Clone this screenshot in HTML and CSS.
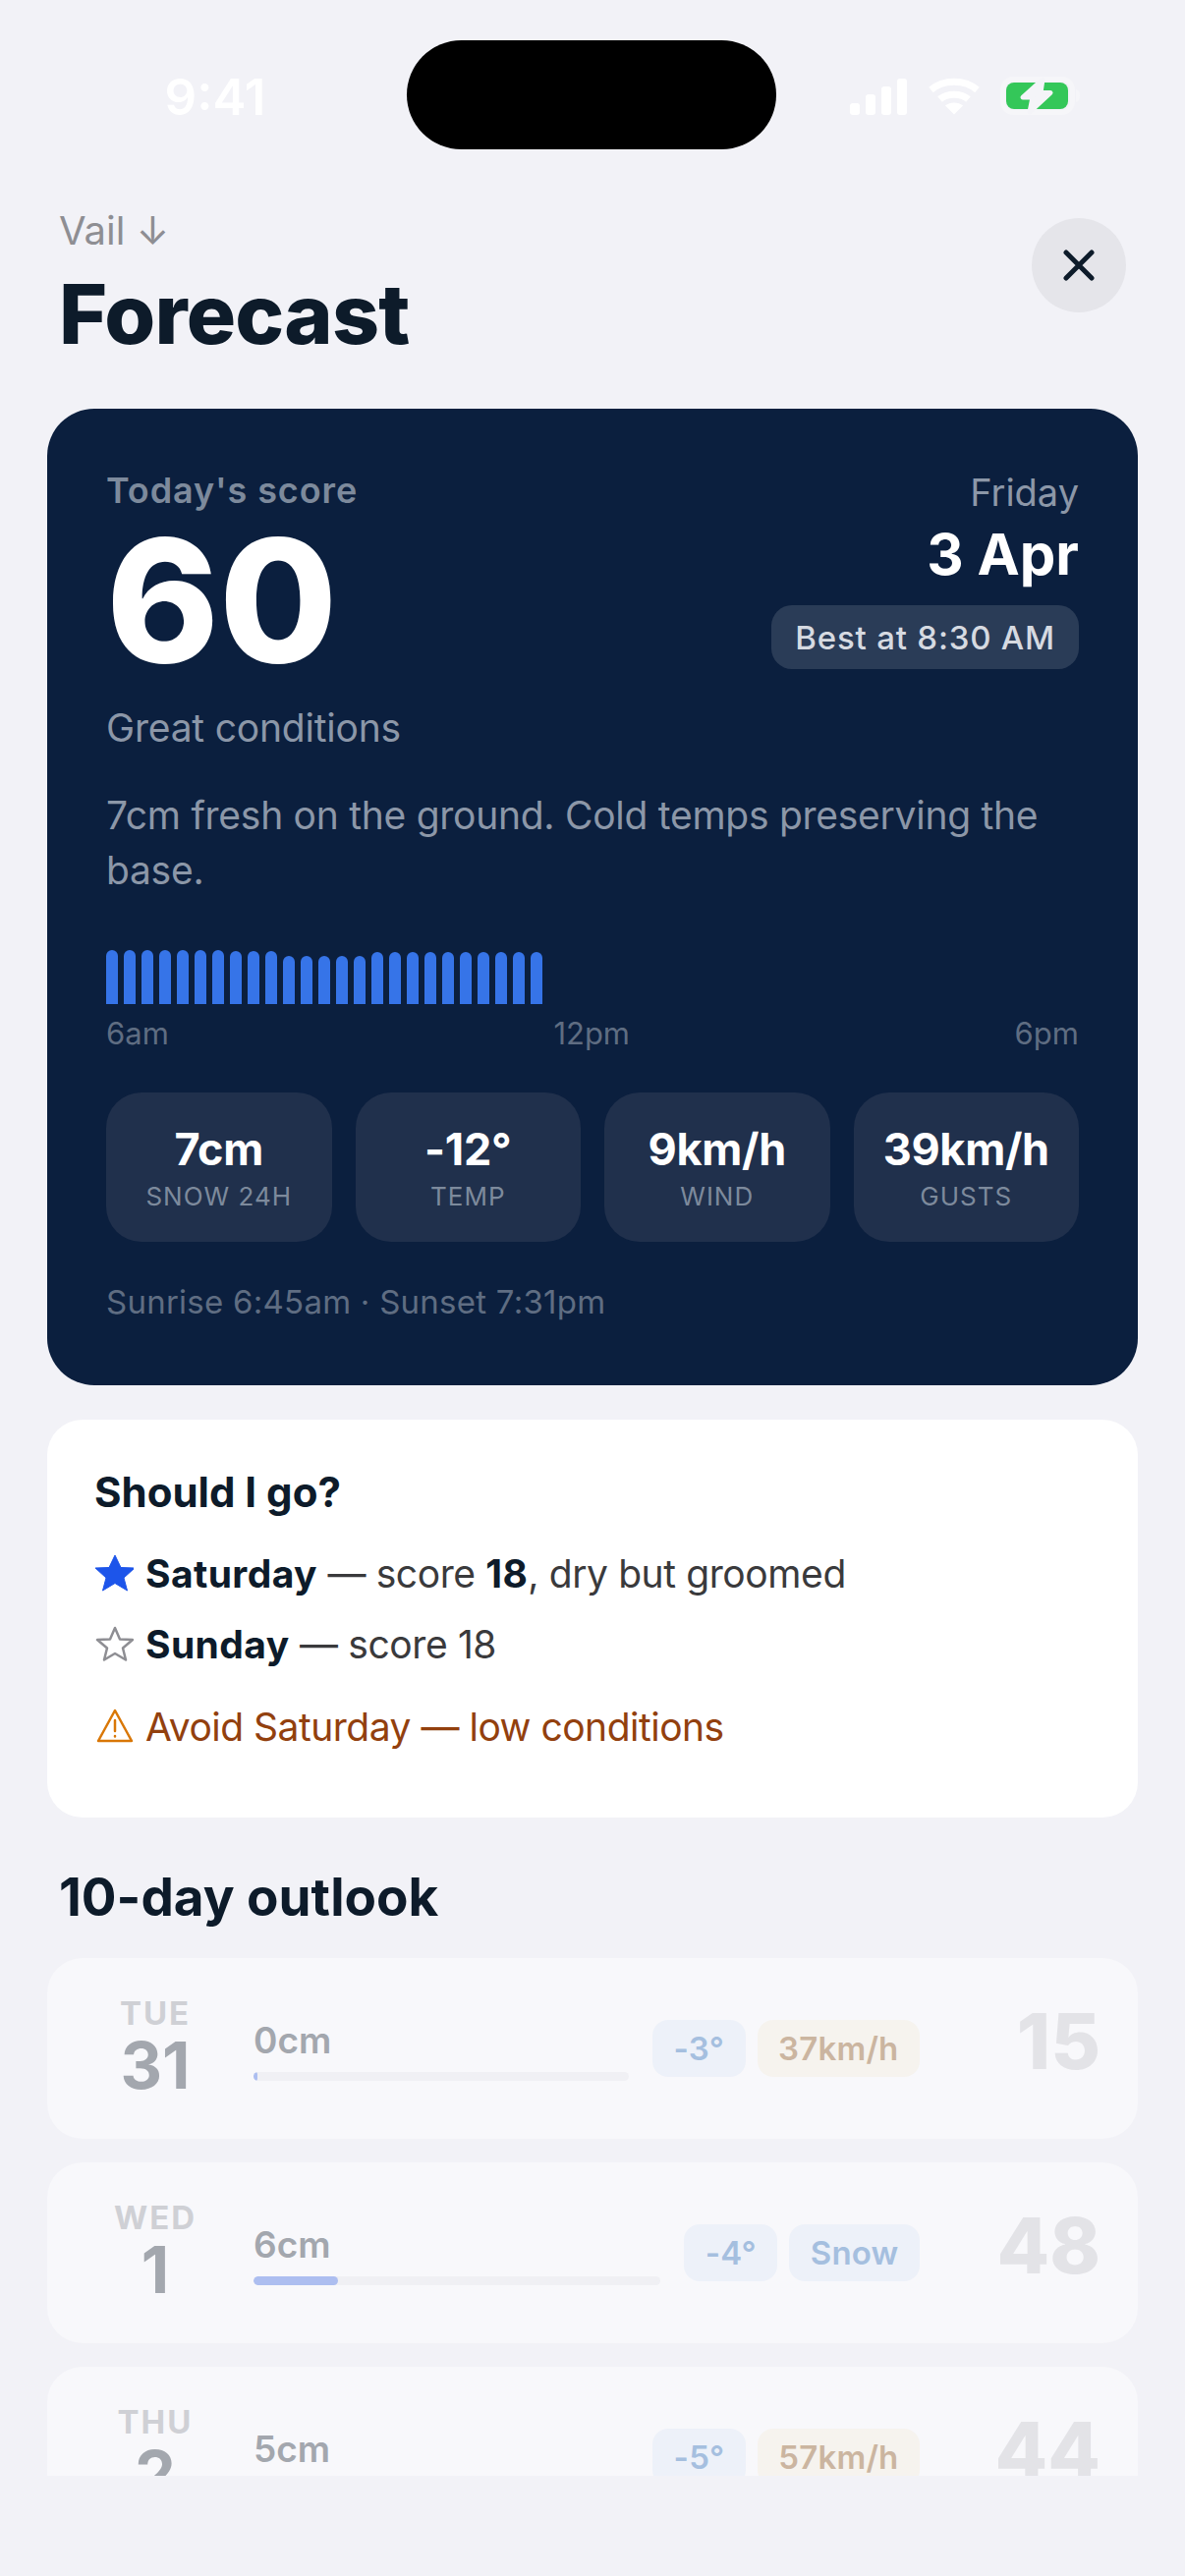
FILE: index.html
```html
<!DOCTYPE html>
<html lang="en">
<head>
    <meta charset="UTF-8">
    <meta name="viewport" content="width=device-width, initial-scale=1.0">
    <title>Forecast</title>
    <link rel="stylesheet" href="styles.css">
</head>
<body>

<div class="screen">
    <div class="status">
        <span class="time">9:41</span>
        <div class="island"></div>
        <div class="status-icons">
            <svg width="58" height="37" viewBox="0 0 58 37" fill="#fff">
                <rect x="0" y="25" width="10" height="12" rx="3"/>
                <rect x="16" y="16" width="10" height="21" rx="3"/>
                <rect x="32" y="8" width="10" height="29" rx="3"/>
                <rect x="48" y="0" width="10" height="37" rx="3"/>
            </svg>
            <svg width="52" height="38" viewBox="0 0 52 38" fill="none" stroke="#fff" stroke-width="7">
                <path d="M2.500 12.500 C15 1.500 37 1.500 49.500 12.500"/>
                <path d="M11.500 22 C19 15.500 33 15.500 40.500 22"/>
                <path d="M26 37.500 L17 28.500 C22 24.500 30 24.500 35 28.500 Z" fill="#fff" stroke="none"/>
            </svg>
            <svg class="battery" width="82" height="40" viewBox="0 0 82 40">
                <rect x="2.500" y="2.500" width="71" height="34" rx="11" fill="none" stroke="#f6f6f9" stroke-width="5"/>
                <path d="M77 13 C80 14 81 16 81 19.500 C81 23 80 25 77 26 Z" fill="#f6f6f9"/>
                <rect x="6" y="6" width="63" height="27" rx="8" fill="#34c759"/>
                <path d="M43 3 L23 21 L33 21 L30 36 L51 16.500 L41 16.500 Z" fill="#f4f4f8" stroke="#f4f4f8" stroke-width="5" stroke-linejoin="round"/>
            </svg>
        </div>
    </div>

    <div class="scroll">
        <div class="header">
            <div>
                <div class="resort">Vail ↓</div>
                <h1>Forecast</h1>
            </div>
            <div class="close">
                <svg width="34" height="34" viewBox="0 0 34 34" fill="none" stroke="#0d1b2a" stroke-width="5" stroke-linecap="round">
                    <path d="M4 4 L30 30 M30 4 L4 30"/>
                </svg>
            </div>
        </div>

        <div class="hero">
            <div class="hero-top">
                <div>
                    <div class="hero-label">Today's score</div>
                    <div class="hero-score">60</div>
                </div>
                <div class="hero-date">
                    <div class="hero-day">Friday</div>
                    <div class="hero-num">3 Apr</div>
                    <div class="hero-best">Best at 8:30 AM</div>
                </div>
            </div>
            <div class="hero-cond">Great conditions</div>
            <p class="hero-desc">7cm fresh on the ground. Cold temps preserving the base.</p>

            <div class="hours">
                <i style="height:55px"></i><i style="height:55px"></i><i style="height:55px"></i><i style="height:55px"></i><i style="height:55px"></i>
                <i style="height:55px"></i><i style="height:55px"></i><i style="height:54px"></i><i style="height:54px"></i><i style="height:54px"></i>
                <i style="height:49px"></i><i style="height:49px"></i><i style="height:49px"></i><i style="height:49px"></i><i style="height:49px"></i>
                <i style="height:53px"></i><i style="height:53px"></i><i style="height:53px"></i><i style="height:53px"></i><i style="height:53px"></i>
                <i style="height:53px"></i><i style="height:53px"></i><i style="height:53px"></i><i style="height:53px"></i><i style="height:53px"></i>
            </div>
            <div class="hour-labels">
                <span>6am</span>
                <span>12pm</span>
                <span>6pm</span>
            </div>

            <div class="stats">
                <div class="stat"><b>7cm</b><span>SNOW 24H</span></div>
                <div class="stat"><b>-12°</b><span>TEMP</span></div>
                <div class="stat"><b>9km/h</b><span>WIND</span></div>
                <div class="stat"><b>39km/h</b><span>GUSTS</span></div>
            </div>
            <div class="sun">Sunrise 6:45am · Sunset 7:31pm</div>
        </div>

        <div class="go">
            <h3>Should I go?</h3>
            <div class="go-row">
                <svg width="40" height="38" viewBox="0 0 40 38"><path d="M21 1 L27 13.500 L41 14 L30 24 L33.500 37 L21 29.500 L8.500 37 L12 24 L1 14 L15 13.500 Z" fill="#1d55ea" stroke="#1d55ea" stroke-width="1" stroke-linejoin="round"/></svg>
                <span><b>Saturday</b> — score <b>18</b>, dry but groomed</span>
            </div>
            <div class="go-row">
                <svg width="40" height="38" viewBox="0 0 40 38"><path d="M21 3 L26 14.500 L39 15 L29 23.500 L32 35.500 L21 29 L10 35.500 L13 23.500 L3 15 L16 14.500 Z" fill="none" stroke="#8e8e93" stroke-width="2.500" stroke-linejoin="round"/></svg>
                <span><b>Sunday</b> — score 18</span>
            </div>
            <div class="go-row go-warn">
                <svg width="40" height="38" viewBox="0 0 40 38" fill="none" stroke="#d97706" stroke-width="2.500" stroke-linejoin="round" stroke-linecap="round">
                    <path d="M21 3 L38 34 L4 34 Z"/>
                    <path d="M21 13 L21 24 M21 29 L21 29.500"/>
                </svg>
                <span>Avoid Saturday — low conditions</span>
            </div>
        </div>

        <h2>10-day outlook</h2>

        <div class="day">
            <div class="day-date"><small>TUE</small><b>31</b></div>
            <div class="day-snow">
                <span>0cm</span>
                <div class="track"><div class="fill" style="width:4px"></div></div>
            </div>
            <div class="chips"><span class="chip">-3°</span><span class="chip warm">37km/h</span></div>
            <div class="day-score">15</div>
        </div>
        <div class="day">
            <div class="day-date"><small>WED</small><b>1</b></div>
            <div class="day-snow">
                <span>6cm</span>
                <div class="track"><div class="fill" style="width:86px"></div></div>
            </div>
            <div class="chips"><span class="chip">-4°</span><span class="chip">Snow</span></div>
            <div class="day-score">48</div>
        </div>
        <div class="day">
            <div class="day-date"><small>THU</small><b>2</b></div>
            <div class="day-snow">
                <span>5cm</span>
                <div class="track"><div class="fill" style="width:70px"></div></div>
            </div>
            <div class="chips"><span class="chip">-5°</span><span class="chip warm">57km/h</span></div>
            <div class="day-score">44</div>
        </div>
    </div>
</div>

</body>
</html>
```

FILE: styles.css
```css
* {
    box-sizing: border-box;
}
body {
    margin: 0;
    background-color: #f2f2f7;
    font-family: Inter, "Noto Sans", sans-serif;
    color: #0d1b2a;
}
.screen {
    width: 1206px;
    height: 2622px;
    overflow: hidden;
}

/* status bar */
.status {
    height: 152px;
    padding-top: 41px;
    display: flex;
    align-items: flex-start;
}
.time {
    width: 414px;
    text-align: center;
    margin-top: 30px;
    padding-left: 24px;
    font-size: 51px;
    line-height: 56px;
    font-weight: 600;
    color: #fff;
}
.island {
    width: 376px;
    height: 111px;
    background: #000;
    border-radius: 56px;
}
.status-icons {
    margin-left: 75px;
    margin-top: 37px;
    display: flex;
    align-items: center;
    gap: 22px;
}
.battery {
    margin-left: -1px;
}

/* header */
.scroll {
    height: 2368px;
    overflow: hidden;
    padding: 0 48px;
}
.header {
    display: flex;
    justify-content: space-between;
    padding: 53px 12px 0;
    height: 264px;
}
.resort {
    margin-bottom: 5px;
    font-size: 40px;
    line-height: 60px;
    color: #8e8e93;
}
h1 {
    margin: 0;
    font-size: 84px;
    line-height: 100px;
    font-weight: 800;
    letter-spacing: -0.8px;
}
.close {
    width: 96px;
    height: 96px;
    margin-top: 17px;
    border-radius: 50%;
    background: #e5e5ea;
    display: flex;
    align-items: center;
    justify-content: center;
}

/* hero card */
.hero {
    background: #0b1f3e;
    border-radius: 48px;
    padding: 62px 60px 0;
    height: 994px;
    color: #fff;
}
.hero-top {
    display: flex;
    justify-content: space-between;
}
.hero-label {
    font-size: 36px;
    line-height: 42px;
    font-weight: 600;
    letter-spacing: 0.9px;
    color: #7d8a9c;
}
.hero-score {
    margin-top: -2px;
    margin-bottom: 2px;
    font-size: 174px;
    line-height: 185px;
    font-weight: 800;
}
.hero-date {
    display: flex;
    flex-direction: column;
    align-items: flex-end;
}
.hero-day {
    margin-top: -1px;
    font-size: 38px;
    line-height: 48px;
    color: #8c97a8;
}
.hero-num {
    margin-top: 3px;
    font-size: 58px;
    line-height: 72px;
    font-weight: 700;
}
.hero-best {
    margin-top: 16px;
    height: 65px;
    padding: 0 24px;
    display: flex;
    align-items: center;
    font-size: 33px;
    font-weight: 500;
    letter-spacing: 0.8px;
    color: #d6dae1;
    background: rgba(255, 255, 255, 0.13);
    border-radius: 21px;
}
.hero-cond {
    margin-top: 11px;
    font-size: 39px;
    line-height: 50px;
    letter-spacing: -0.2px;
    color: #8c97a8;
}
.hero-desc {
    margin: 36px 0 0;
    font-size: 39px;
    line-height: 56px;
    letter-spacing: -0.27px;
    color: #8c97a8;
}
.hours {
    margin-top: 53px;
    height: 55px;
    display: flex;
    align-items: flex-end;
    gap: 6px;
}
.hours i {
    display: block;
    width: 12px;
    background: #3674e8;
    border-radius: 6px 6px 0 0;
}
.hour-labels {
    margin-top: 10px;
    display: flex;
    justify-content: space-between;
    font-size: 31px;
    line-height: 40px;
    color: #5f6d82;
}
.stats {
    margin-top: 40px;
    display: grid;
    grid-template-columns: repeat(4, 1fr);
    gap: 24px;
}
.stat {
    height: 152px;
    background: #20304c;
    border-radius: 36px;
    display: flex;
    flex-direction: column;
    align-items: center;
    justify-content: center;
}
.stat b {
    font-size: 45px;
    line-height: 60px;
    font-weight: 700;
    letter-spacing: -0.3px;
}
.stat span {
    font-size: 26px;
    line-height: 36px;
    letter-spacing: 1px;
    color: #7d8a9c;
}
.sun {
    margin-top: 39px;
    font-size: 33px;
    line-height: 44px;
    letter-spacing: 0.25px;
    color: #5f6d82;
}

/* should I go */
.go {
    margin-top: 35px;
    height: 405px;
    background: #fff;
    border-radius: 36px;
    padding: 48px;
}
h3 {
    margin: 0 0 20px;
    font-size: 42px;
    line-height: 52px;
    font-weight: 700;
}
.go-row {
    display: flex;
    align-items: center;
    gap: 12px;
    height: 72px;
    font-size: 39px;
    letter-spacing: -0.4px;
    color: #3a3a3c;
}
.go-row b {
    color: #0d1b2a;
    font-weight: 700;
    letter-spacing: 0.4px;
}
.go-warn {
    margin-top: 12px;
    letter-spacing: -0.5px;
    color: #92400e;
}

/* outlook, past days are washed out */
h2 {
    margin: 48px 12px 29px;
    font-size: 53px;
    line-height: 66px;
    font-weight: 700;
}
.day {
    height: 184px;
    margin-bottom: 24px;
    padding: 0 38px 0 40px;
    background: #f8f8fb;
    border-radius: 36px;
    display: flex;
    align-items: center;
}
.day-date {
    width: 140px;
    margin-right: 30px;
    margin-bottom: 3px;
    display: flex;
    flex-direction: column;
    align-items: center;
}
.day-date small {
    font-size: 33px;
    line-height: 38px;
    font-weight: 700;
    letter-spacing: 2px;
    color: #cfd0d5;
}
.day-date b {
    font-size: 66px;
    line-height: 69px;
    font-weight: 700;
    color: #a3a7ae;
}
.day-snow {
    flex: 1;
    margin-right: 24px;
    margin-top: 2px;
}
.day-snow span {
    display: block;
    font-size: 37px;
    line-height: 44px;
    font-weight: 600;
    color: #a3a7ae;
}
.track {
    margin-top: 10px;
    height: 9px;
    background: #f0f0f4;
    border-radius: 5px;
    overflow: hidden;
}
.fill {
    height: 100%;
    background: #adbef0;
    border-radius: 5px;
}
.chips {
    display: flex;
    gap: 12px;
}
.chip {
    height: 58px;
    padding: 0 21.5px;
    display: flex;
    align-items: center;
    font-size: 33px;
    font-weight: 600;
    letter-spacing: 0.2px;
    color: #a5bfdf;
    background: #edf1f9;
    border-radius: 16px;
}
.chip.warm {
    color: #cbb5a0;
    background: #f6f3ee;
}
.day-score {
    width: 184px;
    margin-bottom: 14px;
    text-align: right;
    font-size: 78px;
    line-height: 86px;
    font-weight: 800;
    color: #e3e3e7;
}
```
